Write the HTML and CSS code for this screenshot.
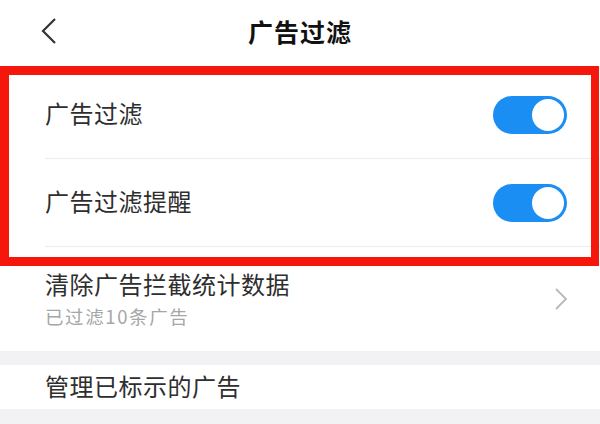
FILE: index.html
```html
<!DOCTYPE html>
<html lang="zh-CN">
<head>
    <meta charset="UTF-8">
    <meta name="viewport" content="width=device-width, initial-scale=1.0">
    <title>广告过滤</title>
    <link rel="stylesheet" href="styles.css">
</head>
<body>
    <div class="header">
        <div class="back">
            <svg width="16" height="28" viewBox="0 0 16 28">
                <polyline points="14,2 2,14 14,26" fill="none" stroke="#333" stroke-width="2.2"/>
            </svg>
        </div>
        <h1 class="title">广告过滤</h1>
        <div></div>
    </div>

    <div class="group">
        <div class="row row-switch">
            <div class="row-body">
                <span class="row-title">广告过滤</span>
                <span class="switch on"><span class="knob"></span></span>
            </div>
        </div>
        <div class="row row-switch">
            <div class="row-body">
                <span class="row-title">广告过滤提醒</span>
                <span class="switch on"><span class="knob"></span></span>
            </div>
        </div>
        <div class="row row-link">
            <div class="row-body no-line">
                <div class="row-text">
                    <span class="row-title">清除广告拦截统计数据</span>
                    <span class="row-sub">已过滤10条广告</span>
                </div>
                <svg class="arrow" width="14" height="24" viewBox="0 0 14 24">
                    <polyline points="2,2 12,12 2,22" fill="none" stroke="#b8b8b8" stroke-width="1.8"/>
                </svg>
            </div>
        </div>
    </div>

    <div class="group">
        <div class="row row-plain">
            <div class="row-body no-line">
                <span class="row-title">管理已标示的广告</span>
            </div>
        </div>
    </div>

    <!-- 标注框 -->
    <div class="highlight"></div>
</body>
</html>
```

FILE: styles.css
```css
body {
    margin: 0;
    padding: 0;
    background-color: #f2f2f4;
    font-family: "Noto Sans CJK SC", "Noto Sans", sans-serif;
    color: #333;
    position: relative;
}

.header {
    display: grid;
    grid-template-columns: 1fr auto 1fr;
    align-items: center;
    height: 62px;
    padding-bottom: 9px;
    background-color: #fff;
}

.back {
    padding-left: 41px;
    display: flex;
    align-items: center;
}

.title {
    margin: 0;
    font-size: 25px;
    font-weight: bold;
    letter-spacing: 1px;
    color: #111;
}

.group {
    background-color: #fff;
    margin-bottom: 14px;
}

.row {
    padding-left: 45px;
}

.row-body {
    display: flex;
    align-items: center;
    justify-content: space-between;
    padding-right: 33px;
    border-bottom: 1px solid #ececec;
}

.row-body.no-line {
    border-bottom: none;
}

.row-switch .row-body {
    height: 87px;
}

.row-switch .row-title {
    margin-top: -4px;
}

.row-link .row-body {
    height: 104px;
}

.row-plain .row-body {
    height: 44px;
}

.row-plain .row-title {
    margin-top: -3px;
}

.row-title {
    font-size: 24px;
    letter-spacing: 0.5px;
    color: #2e2e2e;
}

.row-text {
    display: flex;
    flex-direction: column;
    gap: 2px;
    margin-top: -3px;
}

.row-sub {
    font-size: 18.5px;
    letter-spacing: 1.6px;
    color: #a6a6a6;
}

.arrow {
    margin-right: -1px;
}

.switch {
    display: flex;
    justify-content: flex-end;
    align-items: center;
    box-sizing: border-box;
    width: 74px;
    height: 38px;
    padding: 3px;
    border-radius: 19px;
    background-color: #ccc;
}

.switch.on {
    background-color: #1a8ef2;
}

.knob {
    width: 32px;
    height: 32px;
    border-radius: 50%;
    background-color: #fff;
}

.highlight {
    position: absolute;
    top: 66px;
    left: 0;
    width: 599px;
    height: 200px;
    box-sizing: border-box;
    border: 9px solid #f5170b;
    border-right-width: 8px;
}
```
